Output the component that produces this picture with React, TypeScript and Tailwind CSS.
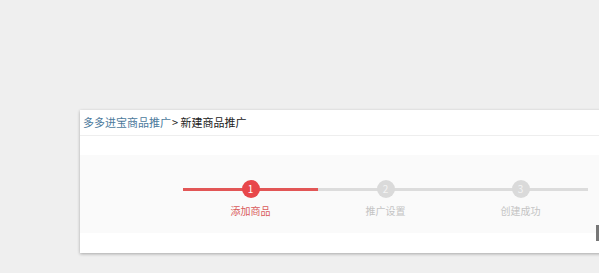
import React from "react";

const steps = [
  { n: "1", label: "添加商品", active: true },
  { n: "2", label: "推广设置", active: false },
  { n: "3", label: "创建成功", active: false },
];

export default function App() {
  return (
    <div
      className="w-[599px] h-[273px] bg-[#efefef] overflow-hidden pt-[110px] pl-[80px]"
      style={{ fontFamily: '"Noto Sans CJK SC", "Liberation Sans", sans-serif' }}
    >
      <div className="bg-white h-[143px] w-[540px] shadow-[0_1px_3px_rgba(0,0,0,0.3)] flex flex-col">
        <div className="h-[26px] border-b border-[#eeeeee] flex items-center pl-[3px] text-[11px] leading-none">
          <span className="text-[#4c7a9c]">多多进宝商品推广</span>
          <span className="text-[#222] ml-[1px]">&gt; 新建商品推广</span>
        </div>
        <div className="mt-[19px] h-[78px] bg-[#fafafa] flex">
          <div className="ml-[103px] mt-[25px] flex">
            {steps.map((s) => (
              <div key={s.n} className="w-[135px] flex flex-col items-center relative">
                <div
                  className={
                    "absolute left-0 right-0 top-[8px] h-[3px] " +
                    (s.active ? "bg-[#e25656]" : "bg-[#dcdcdc]")
                  }
                />
                <div
                  className={
                    "relative w-[18px] h-[18px] rounded-full flex items-center justify-center text-[10px] leading-none " +
                    (s.active ? "bg-[#e8474b] text-white" : "bg-[#dadada] text-[#f4f4f4]")
                  }
                >
                  {s.n}
                </div>
                <div
                  className={
                    "mt-[8px] text-[10px] leading-none " +
                    (s.active ? "text-[#d95b5b]" : "text-[#c4c4c4]")
                  }
                >
                  {s.label}
                </div>
              </div>
            ))}
          </div>
        </div>
      </div>
      <div className="absolute left-[596px] top-[225px] w-[3px] h-[16px] bg-[#777]" />
    </div>
  );
}
